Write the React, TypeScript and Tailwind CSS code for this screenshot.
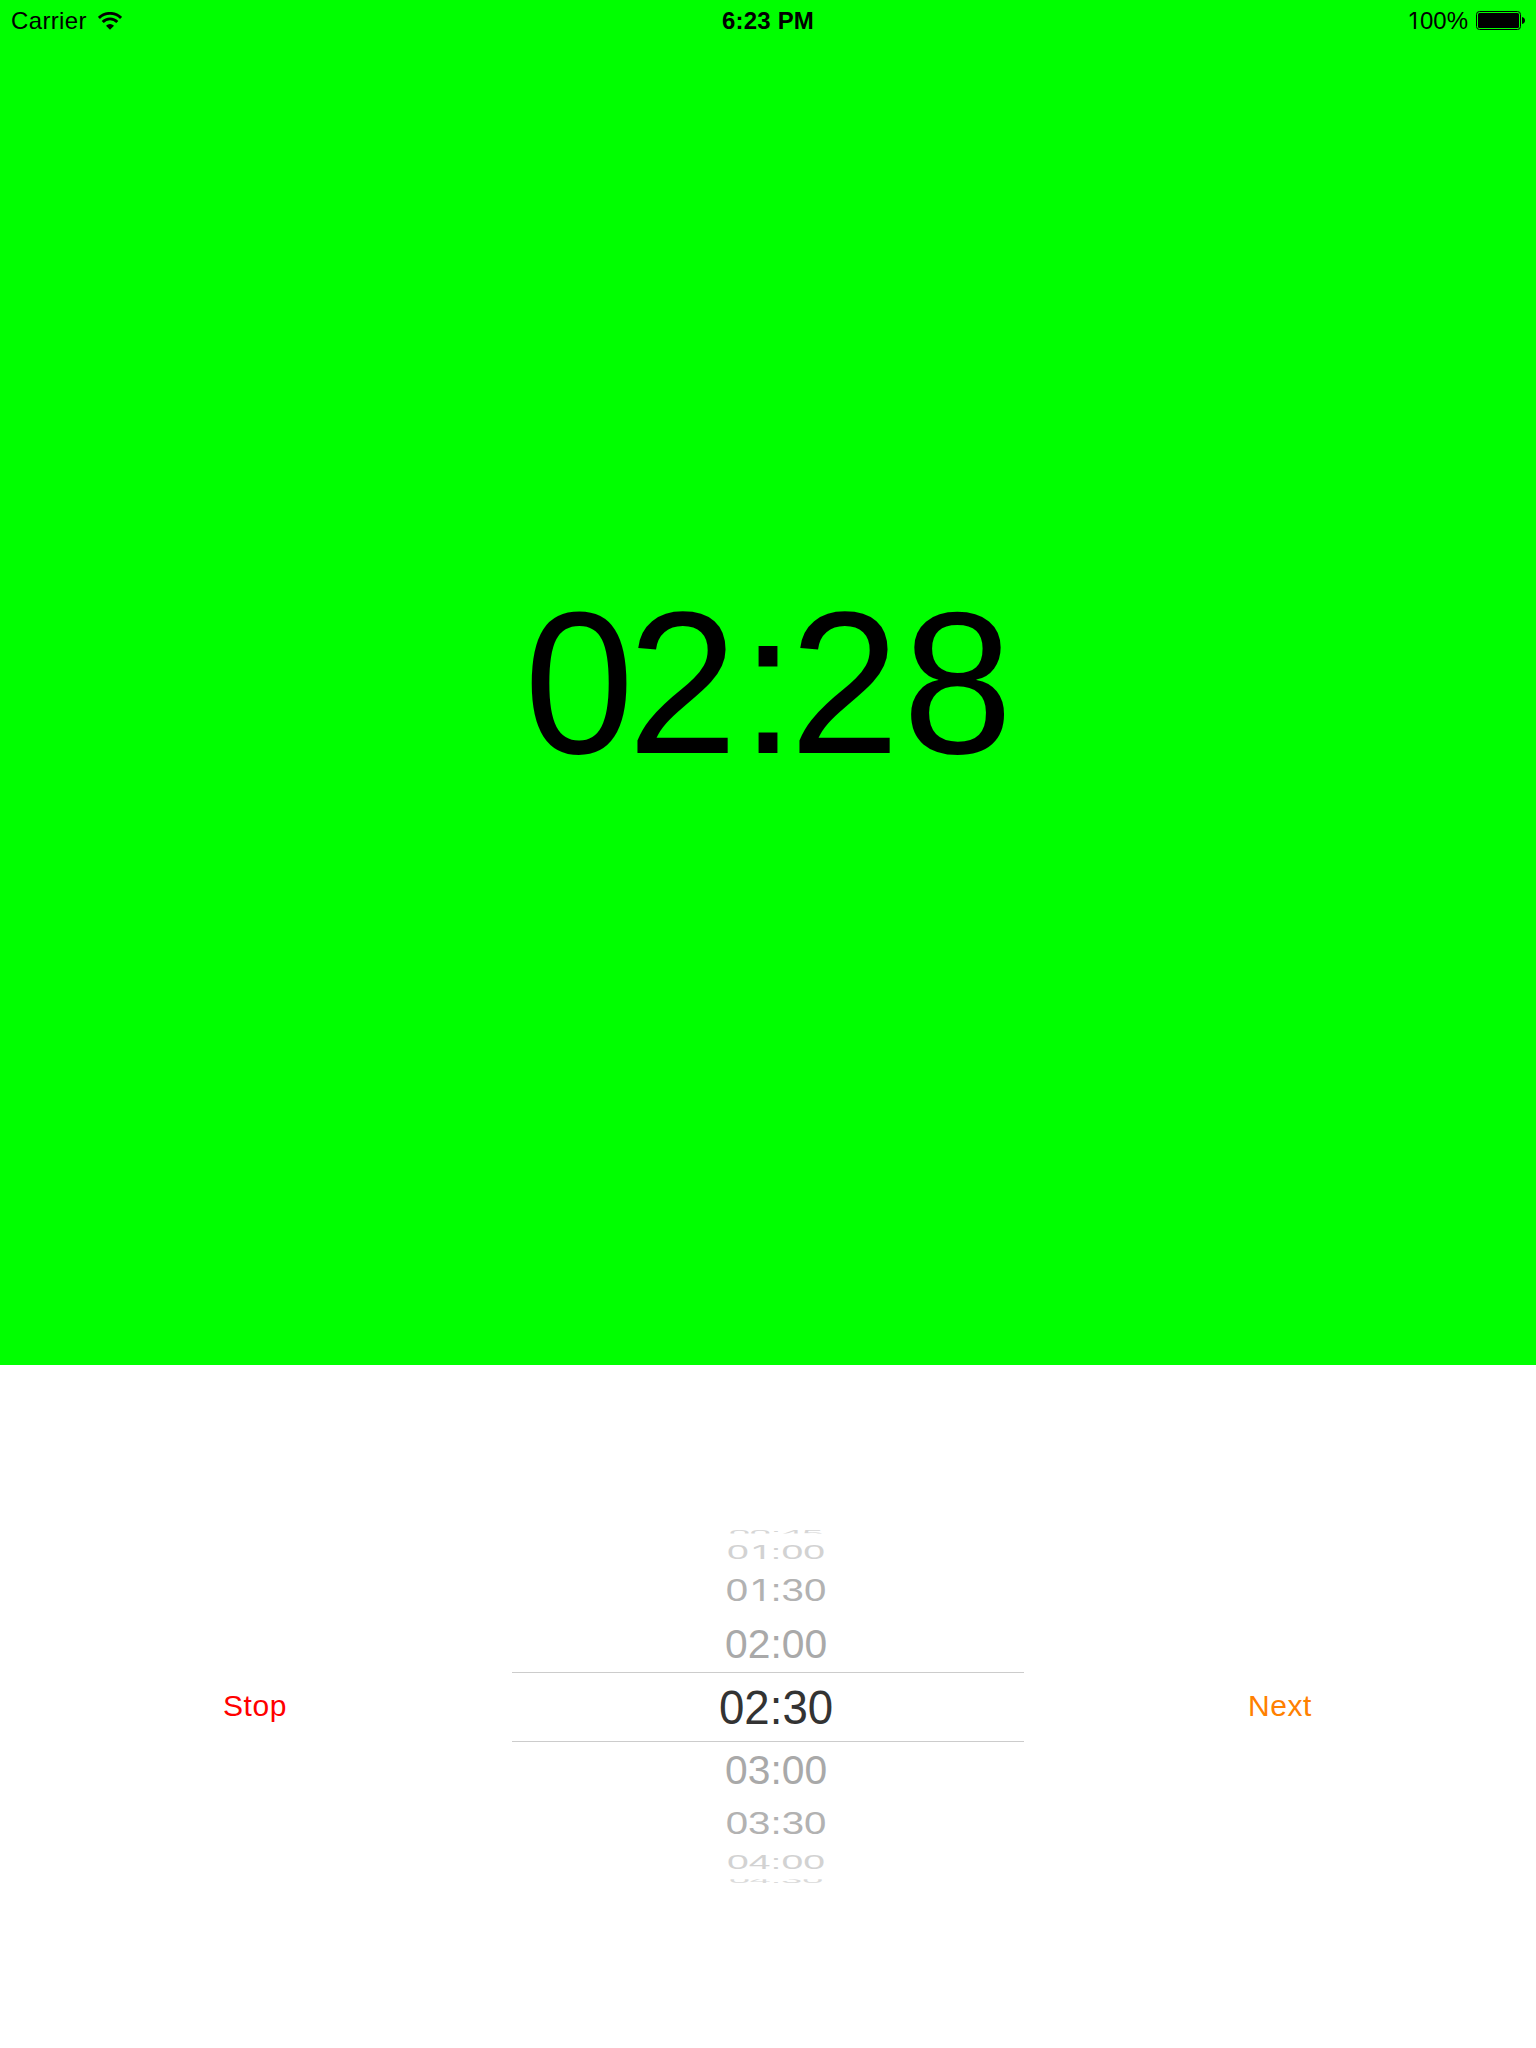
import React from "react";

/** Picker digits; the "1" is set in a face that has no foot serif. */
function Digits({ text }: { text: string }) {
  return (
    <>
      {text.split("").map((c, i) =>
        c === "1" ? (
          <span key={i} className="inline-block w-[0.588em] text-center font-['Inter'] text-[0.945em] leading-[0]">
            1
          </span>
        ) : (
          <span key={i} className={`inline-block ${c === ":" ? "w-[0.278em]" : "w-[0.556em]"}`}>
            {c}
          </span>
        ),
      )}
    </>
  );
}

function Wifi() {
  return (
    <svg width="24" height="18" viewBox="0 0 24 18" fill="none" stroke="#000" strokeWidth="2.9">
      <path d="M0.9 6 A15.6 15.6 0 0 1 23.1 6" />
      <path d="M4.7 10 A10.2 10.2 0 0 1 19.3 10" />
      <path d="M12 17.8 L8 13.7 A5.6 5.6 0 0 1 16 13.7 Z" fill="#000" stroke="none" />
    </svg>
  );
}

function Battery() {
  return (
    <svg width="49" height="20" viewBox="0 0 49 20">
      <rect x="0.5" y="0.5" width="44" height="18" rx="3" fill="none" stroke="#000" />
      <rect x="2" y="2" width="41" height="15" rx="1.5" fill="#000" />
      <path d="M46 6 C48 6.3 49 8 49 9.5 C49 11 48 12.7 46 13 Z" fill="#000" />
    </svg>
  );
}

type PickerRow = { t: string; box: string; text: string };

const rowsAbove: PickerRow[] = [
  { t: "00:45", box: "h-[8px]", text: "scale-x-[0.785] scale-y-[0.2] text-[#d6d6d6] [clip-path:inset(0_0_22px_0)]" },
  { t: "01:00", box: "h-[30px]", text: "scale-x-[0.815] scale-y-[0.42] text-[#d2d2d2]" },
  { t: "01:30", box: "h-[46px]", text: "scale-x-[0.838] scale-y-[0.66] text-[#b2b2b2]" },
  { t: "02:00", box: "h-[59px]", text: "scale-x-[0.85] scale-y-[0.845] translate-y-[1px] text-[#a9a9a9]" },
];

const rowsBelow: PickerRow[] = [
  { t: "03:00", box: "h-[58px]", text: "scale-x-[0.85] scale-y-[0.845] translate-y-[-1px] text-[#a9a9a9]" },
  { t: "03:30", box: "h-[46px]", text: "scale-x-[0.838] scale-y-[0.66] text-[#b2b2b2]" },
  { t: "04:00", box: "h-[31px]", text: "scale-x-[0.815] scale-y-[0.42] text-[#d2d2d2]" },
  { t: "04:30", box: "h-[8px]", text: "scale-x-[0.785] scale-y-[0.2] translate-y-[-1px] text-[#dadada] [clip-path:inset(20px_0_0_0)]" },
];

function Row({ r }: { r: PickerRow }) {
  return (
    <div className={`flex items-center justify-center ${r.box}`}>
      <span className={`text-[48px] leading-[48px] whitespace-nowrap ${r.text}`}>
        <Digits text={r.t} />
      </span>
    </div>
  );
}

export default function App() {
  return (
    <div className="flex h-[2048px] w-[1536px] flex-col bg-white font-['Liberation_Sans',sans-serif] text-black">
      <section className="flex h-[1365px] flex-col bg-[#00ff00]">
        <header className="grid h-[42px] grid-cols-3 px-[11px] text-[24px] leading-[42px]">
          <div className="flex items-center gap-[11px]">
            <span className="tracking-[0.35px]">Carrier</span>
            <Wifi />
          </div>
          <div className="text-center font-bold tracking-[0.2px]">6:23 PM</div>
          <div className="flex items-center justify-end gap-[8px]">
            <span>
              <Digits text="100" />%
            </span>
            <Battery />
          </div>
        </header>
        <div className="flex flex-1 items-start justify-center pt-[527px]">
          <div className="flex scale-x-[0.976] text-[203px] leading-[227px] whitespace-nowrap">
            <span className="w-[0.523em]">0</span>
            <span className="w-[0.57em]">2</span>
            <span className="w-[0.247em]">:</span>
            <span className="w-[0.571em]">2</span>
            <span className="w-[0.556em]">8</span>
          </div>
        </div>
      </section>
      <section className="grid h-[683px] grid-cols-3">
        <div className="flex items-center justify-center pr-[2px] pb-[2px] text-[30px] tracking-[0.6px] text-[#ff0000]">Stop</div>
        <div className="flex flex-col pt-[164px]">
          <div className="flex flex-col pl-[17px]">
            {rowsAbove.map((r) => (
              <Row key={r.t} r={r} />
            ))}
          </div>
          <div className="flex h-[70px] items-center justify-center border-y border-[#cccccc] pt-[2px] pl-[17px]">
            <span className="scale-x-[0.95] text-[48px] leading-[48px] whitespace-nowrap text-[#333333]">
              <Digits text="02:30" />
            </span>
          </div>
          <div className="flex flex-col pl-[17px]">
            {rowsBelow.map((r) => (
              <Row key={r.t} r={r} />
            ))}
          </div>
        </div>
        <div className="flex items-center justify-center pb-[2px] text-[30px] tracking-[0.6px] text-[#ff8000]">Next</div>
      </section>
    </div>
  );
}
